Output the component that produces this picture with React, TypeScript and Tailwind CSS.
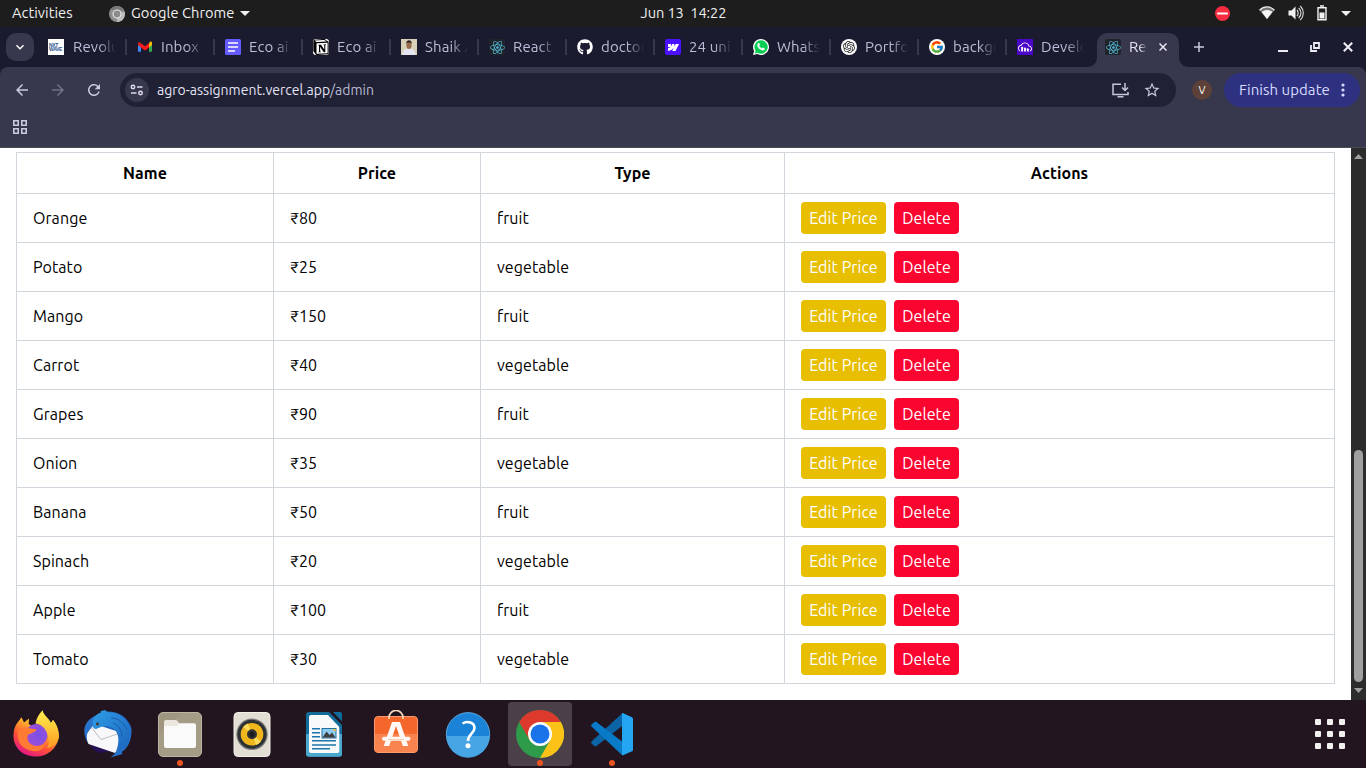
import React from "react";
import { FaGithub, FaReact } from "react-icons/fa";
import { FcGoogle } from "react-icons/fc";
import { SiNotion, SiWebflow, SiOpenai, SiCloudinary } from "react-icons/si";
import { MdArrowBack, MdArrowForward, MdRefresh, MdStarBorder, MdKeyboardArrowDown } from "react-icons/md";

const products = [
  ["Orange", 80, "fruit"],
  ["Potato", 25, "vegetable"],
  ["Mango", 150, "fruit"],
  ["Carrot", 40, "vegetable"],
  ["Grapes", 90, "fruit"],
  ["Onion", 35, "vegetable"],
  ["Banana", 50, "fruit"],
  ["Spinach", 20, "vegetable"],
  ["Apple", 100, "fruit"],
  ["Tomato", 30, "vegetable"],
] as const;

function GmailIcon() {
  return (
    <svg viewBox="0 0 16 16" className="size-4">
      <path d="M1 3.5v9.3h3V7.3z" fill="#4285f4" />
      <path d="M12 12.8h3V3.5l-3 3.8z" fill="#34a853" />
      <path d="M12 4.8v3.6l3-2.3V3.8c0-1.3-1.400-1.700-2.200-1.100z" fill="#fbbc04" />
      <path d="M4 8.400V4.300l4 3 4-3v4.100l-4 3z" fill="#ff1a1a" />
      <path d="M1 3.800v2.300l3 2.300V4.300l-.8-.6C2.400 2.400 1 2.800 1 3.800z" fill="#d5201e" />
    </svg>
  );
}

function FormsIcon() {
  return (
    <svg viewBox="0 0 16 16" className="size-4">
      <rect width="16" height="16" rx="1.500" fill="#635bff" />
      <path d="M3 4h10M3 8h10M3 12h7" stroke="#fff" strokeWidth="1.700" />
    </svg>
  );
}

function PortraitIcon() {
  return (
    <svg viewBox="0 0 16 16" className="size-4">
      <rect width="16" height="16" fill="#d9d0b8" />
      <path d="M1.500 16c0-5 2-6 6.500-6s6.500 1 6.500 6z" fill="#e6e6f2" />
      <rect x="5.500" y="2.500" width="5" height="7.500" rx="2.400" fill="#9a6a4d" />
      <path d="M5 5c0-5 6-5 6 0l-1-1.500H6z" fill="#2d2320" />
    </svg>
  );
}

function WhatsAppIcon() {
  return (
    <svg viewBox="0 0 16 16" className="size-4">
      <path d="M8 0a8 8 0 1 1-3.700 15.100L0 16l1.100-4A8 8 0 0 1 8 0z" fill="#fff" />
      <path d="M8 1.300a6.700 6.700 0 1 1-3.300 12.500l-2.900.7.800-2.800A6.700 6.700 0 0 1 8 1.300z" fill="#05cd51" />
      <path
        d="M5.100 4.300c.6-.6 1.100-.4 1.300.1l.5 1.200c.1.500-.5.900-.7 1.200.6 1.200 1.400 2 2.700 2.600.4-.3.800-1.100 1.300-.8l1.200.6c.6.300.4 1.100 0 1.600-1.600 1.600-4.200.2-5.500-1.200C4.500 8.200 3.600 5.900 5.100 4.300z"
        fill="#fff"
      />
    </svg>
  );
}

function ReactTile() {
  return (
    <span className="flex size-4 shrink-0 items-center justify-center rounded-[2px] bg-[#20232a]">
      <FaReact className="size-[15px] text-[#53bfdc]" />
    </span>
  );
}

const tabs: { title: string; icon: React.ReactNode }[] = [
  {
    title: "Revolu",
    icon: (
      <span className="mr-px -ml-px flex size-4 flex-col items-start justify-center bg-white pl-px font-['Liberation_Sans'] text-[5px] leading-[4px] font-bold tracking-[-0.3px] text-[#2a5591]">
        <span>NXT</span>
        <span>WAVE</span>
      </span>
    ),
  },
  { title: "Inbox", icon: <GmailIcon /> },
  { title: "Eco ai", icon: <FormsIcon /> },
  { title: "Eco ai", icon: <SiNotion className="size-4 rounded-[3px] bg-white text-black" /> },
  { title: "Shaik A", icon: <PortraitIcon /> },
  { title: "React", icon: <ReactTile /> },
  { title: "doctor", icon: <FaGithub className="size-4 text-white" /> },
  {
    title: "24 uni",
    icon: (
      <span className="flex size-4 items-center justify-center rounded-[2px] bg-[#4a10ff]">
        <SiWebflow className="size-[11px] text-white" />
      </span>
    ),
  },
  { title: "Whats", icon: <WhatsAppIcon /> },
  {
    title: "Portfo",
    icon: (
      <span className="flex size-4 items-center justify-center rounded-full bg-white">
        <SiOpenai className="size-3 text-[#222]" />
      </span>
    ),
  },
  {
    title: "backgr",
    icon: (
      <span className="flex size-4 items-center justify-center rounded-full bg-white">
        <FcGoogle className="size-[14px]" />
      </span>
    ),
  },
  {
    title: "Develo",
    icon: (
      <span className="flex size-4 items-center justify-center bg-[#4a06c8]">
        <SiCloudinary className="size-[14px] text-white" />
      </span>
    ),
  },
];

const fade = "[mask-image:linear-gradient(to_right,black_60%,transparent_100%)]";

function TopBar() {
  return (
    <header className="grid h-[27px] grid-cols-[1fr_auto_1fr] items-center bg-[#1d1d1d] text-[14.667px] text-[#f0f0f0]">
      <div className="flex items-center pl-3">
        <span className="w-[97px] pb-px tracking-[0.05px]">Activities</span>
        <svg viewBox="0 0 16 16" className="size-4">
          <circle cx="8" cy="8" r="8" fill="#8d8d8d" />
          <path d="M8 8 15.500 5.500A8 8 0 0 1 8 16z" fill="#bdbdbd" />
          <path d="M1.200 4A8 8 0 0 1 15 4H8z" fill="#787878" />
          <circle cx="8" cy="8" r="4" fill="#8b8b8b" stroke="#e8e8e8" strokeWidth="1.100" />
        </svg>
        <span className="ml-1.5 w-[104px] pb-px whitespace-nowrap tracking-[0.05px]">Google Chrome</span>
        <svg viewBox="0 0 10 5" className="ml-[5px] h-[5px] w-2.5">
          <path d="M0 0h10L5 5z" fill="#f0f0f0" />
        </svg>
      </div>
      <span className="pb-[2px] pl-px whitespace-pre tracking-[-0.1px]">Jun 13  14:22</span>
      <div className="flex items-center justify-end pr-[15px] pb-px">
        <svg viewBox="0 0 15 15" className="mr-[29px] size-[15px]">
          <circle cx="7.500" cy="7.500" r="7.500" fill="#f92c41" />
          <path d="M2.200 7.500h10.600" stroke="#fff" strokeWidth="2" />
        </svg>
        <svg viewBox="0 0 16 14" className="mr-[13px] h-3.5 w-4">
          <path d="M.5 4.200C5-.2 11-.2 15.500 4.200L8 13.200z" fill="#777" />
          <path d="M.5 4.200C5-.2 11-.2 15.500 4.200" fill="none" stroke="#f0f0f0" strokeWidth="1.300" />
          <path d="M2.700 6C6 3.200 10 3.200 13.300 6L8 13z" fill="#f5f5f5" />
        </svg>
        <svg viewBox="0 0 16 16" className="mr-[13px] size-4">
          <path d="M.5 5.500h3L7.500 1.500v13l-4-4h-3z" fill="#f2f2f2" />
          <path d="M9 5c1.500 1.500 1.500 4.500 0 6M10.700 3c3 3 3 7 0 10M12.300 1c4 4 4 10 0 14" fill="none" stroke="#ddd" strokeWidth="1.100" />
        </svg>
        <svg viewBox="0 0 10 16" className="mr-[14px] h-4 w-2.5">
          <path d="M3 1h4M1 2.700h8v12.100H1z" fill="none" stroke="#f2f2f2" strokeWidth="1.400" />
          <path d="M2.500 7.500h5V13.500h-5z" fill="#f2f2f2" />
        </svg>
        <svg viewBox="0 0 10 5" className="h-[5px] w-2.5">
          <path d="M0 0h10L5 5z" fill="#f0f0f0" />
        </svg>
      </div>
    </header>
  );
}

function TabStrip() {
  return (
    <div className="flex h-10 items-center bg-[#1a1b2f] pl-1.5 text-[15px] text-[#bcbdd8]">
      <div className="mr-[15px] flex size-7 shrink-0 items-center justify-center rounded-[10px] bg-[#37384e]">
        <MdKeyboardArrowDown className="size-4 text-white" />
      </div>
      {tabs.map((tab, i) => (
        <div key={i} className="flex w-[88px] shrink-0 items-center">
          {tab.icon}
          <span className={`ml-2 w-[43px] overflow-hidden whitespace-nowrap tracking-[0.1px] ${fade}`}>{tab.title}</span>
          <span className={i === tabs.length - 1 ? "hidden" : "ml-[9px] h-4 w-[2px] bg-[#37384e]"} />
        </div>
      ))}
      <div className="-ml-[18px] flex items-end self-end">
        <svg viewBox="0 0 10 10" className="size-2.5">
          <path d="M0 10C6 10 10 6 10 0v10z" fill="#37384e" />
        </svg>
        <div className="flex h-[34px] w-[82px] items-center rounded-t-[10px] bg-[#37384e] pb-[6px] pl-2 text-[#e4e4f2]">
          <ReactTile />
          <span className={`ml-2 w-[18px] overflow-hidden whitespace-nowrap ${fade}`}>Re</span>
          <svg viewBox="0 0 8 8" className="ml-3 size-2">
            <path d="m.5.5 7 7m0-7-7 7" stroke="#e6e6f4" strokeWidth="1.500" />
          </svg>
        </div>
        <svg viewBox="0 0 10 10" className="size-2.5">
          <path d="M10 10C4 10 0 6 0 0v10z" fill="#37384e" />
        </svg>
      </div>
      <svg viewBox="0 0 10 10" className="ml-[5px] size-2.5">
        <path d="M5 0v10M0 5h10" stroke="#c9cadf" strokeWidth="1.500" />
      </svg>
      <div className="ml-auto flex items-center pr-[13px]">
        <span className="mt-2 h-[2px] w-2.5 bg-[#ececf4]" />
        <svg viewBox="0 0 10 10" className="ml-[22px] size-2.5">
          <path d="M4 1h5v5H4zM1 3v6h6" fill="none" stroke="#ececf4" strokeWidth="1.800" />
        </svg>
        <svg viewBox="0 0 10 10" className="ml-[23px] size-2.5">
          <path d="m.8.8 8.400 8.400m0-8.400L.8 9.200" stroke="#ececf4" strokeWidth="2" />
        </svg>
      </div>
    </div>
  );
}

function Toolbar() {
  return (
    <div className="bg-[#1a1b2f]">
      <div className="h-[81px] rounded-t-[8px] border-b border-[#4a4a52] bg-[#37384e] text-[14px]">
        <div className="flex h-[46px] items-center pr-1.5 pl-[13px]">
          <MdArrowBack className="size-[18px] text-[#c9cade]" />
          <MdArrowForward className="ml-[18px] size-[18px] text-[#717289]" />
          <MdRefresh className="ml-[18px] size-[18px] text-[#c9cade]" />
          <div className="ml-[17px] flex h-[34px] w-[1056px] items-center rounded-full bg-[#202135] pr-[15px] pl-[5px]">
            <span className="flex size-6 items-center justify-center rounded-full bg-[#37384e]">
              <svg viewBox="0 0 14 12" className="h-3 w-3.5" fill="none" stroke="#dcdcec" strokeWidth="1.500">
                <circle cx="3" cy="3" r="1.700" />
                <circle cx="10.500" cy="9" r="1.700" />
                <path d="M7 3h5.500M1 9h5.500" />
              </svg>
            </span>
            <span className="ml-2 text-[#b9bad2]">
              <span className="text-[#e3e3f3]">agro-assignment.vercel.app</span>/admin
            </span>
            <svg viewBox="0 0 17 15" className="ml-auto h-[15px] w-[17px]" fill="none" stroke="#c6c7d9" strokeWidth="1.500">
              <path d="M9 1.200H1v10.300h15V9M5.500 13.700h6" />
              <path d="M13 0v7M10 4.500l3 3 3-3" />
            </svg>
            <MdStarBorder className="ml-[14px] size-[18px] text-[#c6c7d9]" />
          </div>
          <span className="ml-4 flex size-5 items-center justify-center rounded-full bg-[#5d4037] text-[11px] text-white">V</span>
          <div className="ml-3 flex h-[34px] w-[136px] items-center rounded-full bg-[#2d3180] pl-[15px] text-[15px] text-[#d9daff]">
            <span className="w-[92px] whitespace-nowrap tracking-[0.05px]">Finish update</span>
            <svg viewBox="0 0 4 14" className="ml-2.5 h-3.5 w-1" fill="#d9daff">
              <circle cx="2" cy="2" r="1.600" />
              <circle cx="2" cy="7" r="1.600" />
              <circle cx="2" cy="12" r="1.600" />
            </svg>
          </div>
        </div>
        <svg viewBox="0 0 14 14" className="mt-[7px] ml-[13px] size-3.5" fill="none" stroke="#c9cade" strokeWidth="1.600">
          <path d="M.8.8h4.400v4.400H.8zM8.800.8h4.400v4.400H8.800zM.8 8.800h4.400v4.400H.8zM8.800 8.800h4.400v4.400H8.800z" />
        </svg>
      </div>
    </div>
  );
}

function ProductTable() {
  const line = "border-t border-l border-[#d1d5dc]";
  return (
    <table className="w-[1319px] table-fixed border-separate border-spacing-0 border-r border-b border-[#d1d5dc] text-base tracking-[0.08px] text-black">
      <colgroup>
        <col className="w-[257px]" />
        <col className="w-[207px]" />
        <col className="w-[304px]" />
        <col />
      </colgroup>
      <thead>
        <tr className="h-[41px]">
          {["Name", "Price", "Type", "Actions"].map((h) => (
            <th key={h} className={`${line} p-0 font-bold`}>{h}</th>
          ))}
        </tr>
      </thead>
      <tbody>
        {products.map(([name, price, type]) => (
          <tr key={name} className="h-[49px]">
            <td className={`${line} py-0 pl-4`}>{name}</td>
            <td className={`${line} py-0 pl-4 tracking-normal`}>₹{price}</td>
            <td className={`${line} py-0 pl-4`}>{type}</td>
            <td className={`${line} py-0 pl-4`}>
              <div className="flex gap-2 text-white">
                <button className="h-8 w-[85px] rounded bg-[#e7be00] whitespace-nowrap">Edit Price</button>
                <button className="h-8 w-[65px] rounded bg-[#f9052f] whitespace-nowrap">Delete</button>
              </div>
            </td>
          </tr>
        ))}
      </tbody>
    </table>
  );
}

function Scrollbar() {
  return (
    <div className="flex w-[15px] flex-col items-center bg-[#2c2c2c] pt-[6px] pb-[7px]">
      <svg viewBox="0 0 9 5" className="h-[5px] w-[9px]">
        <path d="M4.500 0 9 5H0z" fill="#9f9f9f" />
      </svg>
      <span className="mt-auto h-[232px] w-[9px] rounded-full bg-[#9f9f9f]" />
      <svg viewBox="0 0 9 5" className="mt-[6px] h-[5px] w-[9px]">
        <path d="M0 0h9L4.500 5z" fill="#9f9f9f" />
      </svg>
    </div>
  );
}

function Firefox() {
  return (
    <svg viewBox="0 0 48 48" className="size-12">
      <defs>
        <linearGradient id="ffBody" x1=".85" y1=".1" x2=".3" y2="1">
          <stop offset="0" stopColor="#ffe14a" />
          <stop offset=".35" stopColor="#ffa42c" />
          <stop offset=".65" stopColor="#ff5037" />
          <stop offset="1" stopColor="#e31587" />
        </linearGradient>
        <radialGradient id="ffCore" cx=".6" cy=".5" r=".6">
          <stop offset="0" stopColor="#7a4fe8" />
          <stop offset="1" stopColor="#9a4fd8" />
        </radialGradient>
        <linearGradient id="ffTail" x1="0" y1="0" x2="0" y2="1">
          <stop offset="0" stopColor="#fff14f" />
          <stop offset="1" stopColor="#ff9a22" />
        </linearGradient>
      </defs>
      <path d="M4.500 14 9.500 7.200l2.500 5.300 5-4-.3 5.500L24 19l10-3 5-3 2-3c4 5 6 11 6 17-2 12-12 19.500-23 19.500C10 46.500 1.500 37 1.500 26c0-5 1-9 3-12z" fill="url(#ffBody)" />
      <circle cx="24.500" cy="25" r="11" fill="url(#ffCore)" />
      <path d="M23.500 13.500C25 6 29 2 30.700.2 31 5 37 8 39 13l2-3c5 6 6 12 5.500 18-1 5-5 9-11.500 10 3-4 2-11-1-17-2-4-5-6.500-10.500-7.500z" fill="url(#ffTail)" />
      <path d="M6 21c3-4.500 8-4.500 12-2.500l6.500.8c-.5 3-5.500 3.700-8.500 5.700-2 4 1 10 8 11 5 .5 8-2 9-4 1 7-6 10-12 9C10 40 4 31 6 21z" fill="#ff7a33" />
    </svg>
  );
}

function Thunderbird() {
  return (
    <svg viewBox="0 0 48 48" className="size-12">
      <defs>
        <linearGradient id="tbBody" x1="0" y1="0" x2="1" y2="1">
          <stop offset="0" stopColor="#2f7fd4" />
          <stop offset=".5" stopColor="#1d61bf" />
          <stop offset="1" stopColor="#2a7bd0" />
        </linearGradient>
        <linearGradient id="tbWing" x1="0" y1="0" x2="1" y2="1">
          <stop offset="0" stopColor="#2f9de6" />
          <stop offset="1" stopColor="#1b62bb" />
        </linearGradient>
      </defs>
      <path d="M13 5C20-1 38 0 45 13c2 3 3 6 2.500 9-.5 11-5 17-10 20l1 2-12 3.500c5-4 10-10 10-16L12 14C5 20 3 27 4 33-3 22 0 10 13 5z" fill="url(#tbBody)" />
      <path d="M4.500 33c2 5 7 9 12 10 5-1 9-2 13-1z" fill="#241052" />
      <path d="M3 24c2-4 5-7 8-10l24 8 1 13c-1 3-3 6-5 8L4.500 34C3 31 2.500 28 3 24z" fill="#f8f8fa" />
      <path d="m7.500 17.500 9.500 12L35 23.500" fill="none" stroke="#b3b3bb" strokeWidth=".9" />
      <path d="M9 17c-2-8 3-13 8-14.500C15.500 1.500 18 .5 22 .3c0 2 3 2 7 2.500 9 1 16 9 18 18-1 8-3 14-7 18l-1-3-4 7-.5-4-3.500 5c4-8 6-21-3-26-5-3-10-2-14 .5-2 1-4 1-5-1.300z" fill="url(#tbWing)" />
      <path d="M27 8c8 0 13 5 16 12M29 13c6 2 9 8 9 14" fill="none" stroke="#17529f" strokeWidth=".8" />
      <circle cx="13.500" cy="14" r="1.400" fill="#54301b" />
    </svg>
  );
}

function Files() {
  return (
    <svg viewBox="0 0 48 48" className="size-12">
      <rect x="2.500" y="2.500" width="43" height="44" rx="4.500" fill="#a0967f" stroke="#bdb6a4" />
      <path d="M25 3 3 24v19q0 3 3 3h36q3 0 3-3V6q0-3-3-3z" fill="#a9a08b" opacity=".6" />
      <path d="M8 12q0-2 2-2h9.500q1.500 0 2.500 1.500l1 1.500v7H8z" fill="#ebe7df" />
      <path d="M8 16h13l2.500-2.800H38q2 0 2 2V36q0 2-2 2H10q-2 0-2-2z" fill="#fbfafa" />
    </svg>
  );
}

function Rhythmbox() {
  return (
    <svg viewBox="0 0 48 48" className="size-12">
      <rect x="6" y="2.500" width="36" height="44" rx="4" fill="#e3ded4" stroke="#f3f0ea" />
      <circle cx="24" cy="24.300" r="15.700" fill="#7c7b7b" />
      <circle cx="24" cy="24.300" r="14.500" fill="#2d3133" />
      <circle cx="24" cy="24.300" r="11.300" fill="#efb71b" />
      <path d="m24 24-9-7a11.300 11.300 0 0 1 5-3.500zM24 24l9 7.500a11.300 11.300 0 0 1-5 3.400z" fill="#ffdc57" />
      <circle cx="24" cy="24.300" r="5" fill="#303234" />
      <circle cx="24" cy="24.300" r="2.600" fill="#191b1c" />
    </svg>
  );
}

function Writer() {
  return (
    <svg viewBox="0 0 48 48" className="size-12">
      <path d="M9 2h20l13 13v29q0 2.700-3 2.700H9q-3 0-3-3V5q0-3 3-3z" fill="#126b99" />
      <path d="M6 24h36v20q0 2.700-3 2.700H9q-3 0-3-3z" fill="#4ba7cc" />
      <path d="M33 2h7q2 0 2 2v7.500z" fill="#0e6b9b" />
      <path d="M11 5h17l11.300 12v24q0 2-2 2H11q-2 0-2-2V7q0-2 2-2z" fill="#f8f9fa" />
      <path d="M12 18.700h8M12 22.700h8M12 26.700h8M12 30.700h24M12 35h24M12 38.700h18" stroke="#1c76aa" strokeWidth="1.600" />
      <rect x="22" y="18.500" width="14" height="9.500" fill="#8ccdf1" stroke="#24719e" />
      <path d="m22.500 27.500 4-6 3 3.500 2.500-2.500 3.500 5z" fill="#414141" />
      <path d="M32.500 19h3v3z" fill="#ffc233" />
    </svg>
  );
}

function Software() {
  return (
    <svg viewBox="0 0 48 48" className="size-12">
      <rect x="2.500" y="6.500" width="43" height="36" rx="3.500" fill="#f4662c" stroke="#fb9b70" />
      <path d="M3 24h42v15q0 3-3 3H6q-3 0-3-3z" fill="#f8834f" />
      <path d="M17 9V7.500a7 7 0 0 1 14 0V9" fill="none" stroke="#f4dcbc" strokeWidth="1.700" />
      <path d="m20 12-8.300 24h5.500l6.800-20 6.800 20h5.500L28 12z" fill="#fff8f5" />
      <path d="M12 28.700h24.500" stroke="#fff8f5" strokeWidth="4" strokeLinecap="round" />
      <path d="M16 29.500h16" stroke="#fbc3a9" strokeWidth=".8" />
    </svg>
  );
}

function Help() {
  return (
    <svg viewBox="0 0 48 48" className="size-12">
      <circle cx="24" cy="24.300" r="21.700" fill="#1b83d7" stroke="#67b8ed" strokeWidth=".8" />
      <path d="M2.300 26a21.700 21.700 0 0 0 43.400 0z" fill="#48a5e5" />
      <path d="M18.500 13.500c5-3 12-1 12 4.500 0 5.500-6.500 6-6.500 13" fill="none" stroke="#fff" strokeWidth="2.600" />
      <circle cx="24" cy="35.800" r="2.500" fill="#fff" />
    </svg>
  );
}

function Chrome() {
  return (
    <svg viewBox="0 0 48 48" className="size-12">
      <circle cx="24" cy="24" r="24" fill="#2d9b4a" />
      <path d="M24 12h20.800A24 24 0 0 1 24 48l10.400-18z" fill="#fcc217" />
      <path d="M3.200 12a24 24 0 0 1 41.600 0H24L13.600 30z" fill="#dd392c" />
      <circle cx="24" cy="24" r="12" fill="#fff" />
      <circle cx="24" cy="24" r="9.500" fill="#1a73e8" />
    </svg>
  );
}

function VsCode() {
  return (
    <svg viewBox="0 0 48 48" className="size-12">
      <path d="M3.500 31.500q-1 1 0 2L6.500 36q1 .8 2 0L34 16V3.500z" fill="#0b64a5" />
      <path d="M3.500 16.500q-1-1 0-2L6.500 12q1-.8 2 0L34 31.500V45z" fill="#087ac8" />
      <path d="M34 3.300q-.3-.5.700-.3L44 7.200q1 .5 1 1.500v31q0 1-1 1.500l-9 4q-1 .3-1-.5z" fill="#23a5f1" />
    </svg>
  );
}

const dock = [
  { Icon: Firefox, running: false },
  { Icon: Thunderbird, running: false },
  { Icon: Files, running: true },
  { Icon: Rhythmbox, running: false },
  { Icon: Writer, running: false },
  { Icon: Software, running: false },
  { Icon: Help, running: false },
  { Icon: Chrome, running: true, active: true },
  { Icon: VsCode, running: true },
];

function Dock() {
  return (
    <footer className="flex h-[68px] items-center justify-between bg-[#231520] pr-[21px] pl-1">
      <div className="flex gap-2">
        {dock.map(({ Icon, running, active }, i) => (
          <div key={i} className={`flex h-16 w-16 flex-col items-center rounded pt-2 ${active ? "bg-[#4b3f48]" : ""}`}>
            <Icon />
            <span className={`mt-[2px] size-1.5 shrink-0 rounded-full ${running ? "bg-[#e95420]" : ""}`} />
          </div>
        ))}
      </div>
      <div className="grid grid-cols-3 gap-1.5">
        {Array.from({ length: 9 }, (_, i) => (
          <span key={i} className="size-1.5 rounded-[1px] bg-[#f2f0ee]" />
        ))}
      </div>
    </footer>
  );
}

export default function App() {
  return (
    <div className="flex h-[768px] w-[1366px] flex-col overflow-hidden bg-white font-[Ubuntu,'Noto_Sans','Noto_Sans_CJK_SC',sans-serif]">
      <TopBar />
      <TabStrip />
      <Toolbar />
      <main className="flex h-[552px]">
        <div className="flex-1 pt-1 pl-4">
          <ProductTable />
        </div>
        <Scrollbar />
      </main>
      <Dock />
    </div>
  );
}
